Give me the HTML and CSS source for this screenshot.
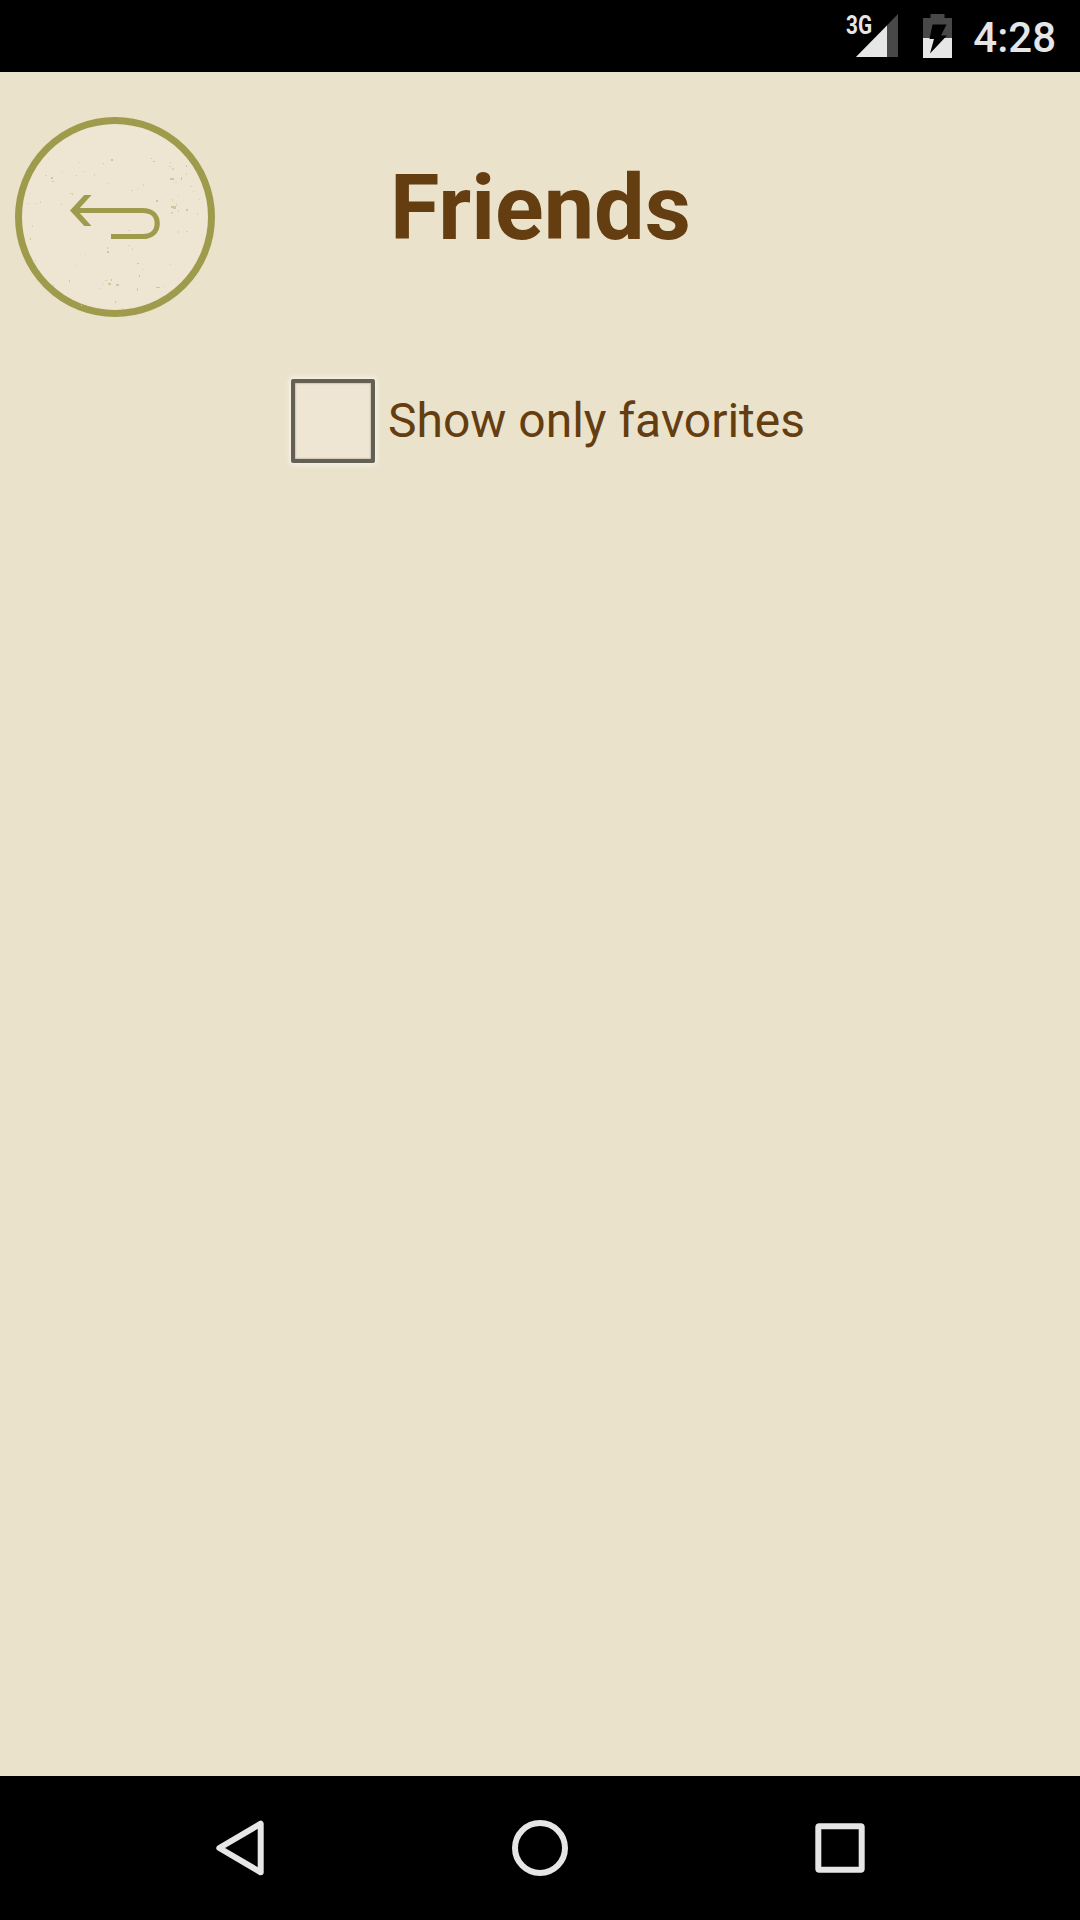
FILE: index.html
```html
<!DOCTYPE html>
<html lang="en">
<head>
<meta charset="utf-8">
<title>Friends</title>
<link rel="stylesheet" href="styles.css">
</head>
<body>
<div class="screen">
  <div class="status-bar">
    <svg class="signal" width="54" height="44" viewBox="0 0 54 44">
      <path class="dim" d="M52 0V43H10z"/>
      <path class="lit" d="M41 11.500V43H10z"/>
      <text class="network" x="0" y="19.500" textLength="26" lengthAdjust="spacingAndGlyphs">3G</text>
    </svg>
    <svg class="battery" width="29" height="44" viewBox="0 0 29 44">
      <path class="dim" d="M7.500 0h14v4H29v20H0V4h7.500z"/>
      <path class="lit" d="M0 24h29v20H0z"/>
      <path class="bolt" d="M9.500 10.500h14L18 21.500h6L7 39.500l4-14.500H6.500z"/>
    </svg>
    <time class="clock">4:28</time>
  </div>
  <main class="content">
    <header class="header">
      <button class="back" aria-label="Back">
        <svg width="200" height="200" viewBox="0 0 200 200">
          <circle class="disc" cx="100" cy="100" r="96.500"/>
          <path class="speck faint" d="M64 45h1v1h-1zM30 58h2v1h-2zM47 55h1v1h-1zM33 41h1v1h-1zM25 84h1v2h-1zM55 76h3v1h-3zM93 66h1v1h-1zM79 57h1v2h-1zM15 76h1v1h-1zM17 108h1v2h-1zM154 49h2v1h-2zM157 51h2v2h-2zM160 65h2v1h-2zM171 56h1v2h-1zM175 69h2v1h-2zM178 74h1v1h-1zM161 86h1v3h-1zM156 95h2v2h-2zM163 93h1v2h-1zM182 96h1v2h-1zM184 82h1v1h-1zM116 73h2v1h-2zM128 67h1v2h-1zM122 71h1v1h-1zM163 79h1v1h-1zM157 82h1v2h-1zM113 128h2v1h-2zM117 131h1v2h-1zM61 148h1v1h-1zM70 137h1v1h-1zM128 152h1v1h-1zM155 147h1v1h-1zM66 188h1v1h-1zM85 171h1v1h-1zM171 114h2v1h-2zM163 114h1v2h-1zM113 113h2v1h-2zM148 169h1v1h-1zM90 163h2v1h-2zM88 167h1v1h-1z"/>
          <path class="speck" d="M36 60h2v2h-2zM37 64h2v1h-2zM61 58h1v1h-1zM69 54h1v1h-1zM96 42h2v2h-2zM88 46h1v1h-1zM21 86h1v1h-1zM13 86h1v1h-1zM46 87h1v1h-1zM57 77h1v1h-1zM136 41h1v1h-1zM138 44h2v1h-2zM155 61h4v2h-4zM166 60h1v3h-1zM155 45h1v1h-1zM171 48h1v2h-1zM156 89h5v2h-5zM158 91h3v1h-3zM141 83h2v2h-2zM171 92h2v2h-2zM15 121h1v2h-1zM92 134h2v2h-2zM92 130h1v2h-1zM20 143h1v1h-1zM122 146h2v1h-2zM38 168h1v2h-1zM54 163h1v2h-1zM93 166h3v2h-3zM96 162h1v2h-1zM101 167h3v2h-3zM122 171h1v3h-1zM124 158h1v2h-1zM141 170h4v1h-4zM100 184h1v2h-1zM107 191h1v1h-1z"/>
          <path class="arrow" d="M96 119.500h31.500c9 0 14.700-5 14.700-13s-5.700-13-14.700-13H61"/>
          <path class="arrow-head" d="M55 93.500 69.300 78h7.200L62.500 93.500 76.500 109h-7.200z"/>
        </svg>
      </button>
      <h1 class="title">Friends</h1>
    </header>
    <label class="filter"><input class="checkbox" type="checkbox"><span class="filter-text">Show only favorites</span></label>
  </main>
  <nav class="nav-bar">
    <svg width="60" height="60" viewBox="0 0 60 60"><path d="M50.700 5.700v48.600L9.300 30z"/></svg>
    <svg width="60" height="60" viewBox="0 0 60 60"><circle cx="30" cy="30" r="25"/></svg>
    <svg width="60" height="60" viewBox="0 0 60 60"><rect x="8.300" y="8.300" width="43.400" height="43.400" rx="1"/></svg>
  </nav>
</div>
</body>
</html>
```
FILE: styles.css
```css
* { box-sizing: border-box; }
body { margin: 0; font-family: Roboto, sans-serif; }
.screen {
  display: flex;
  flex-direction: column;
  height: 1920px;
  width: 1080px;
  background: #eae2cb;
  color: #643d10;
}
.status-bar {
  display: flex;
  justify-content: flex-end;
  height: 72px;
  padding: 14px 24px 0 0;
  background: #000;
  color: #e6e6e6;
}
.signal { margin-right: 23px; overflow: visible; }
.battery { margin-right: 21px; }
.dim { fill: #484848; }
.lit { fill: #e6e6e6; }
.bolt { fill: #000; }
.network { fill: #e6e6e6; font-size: 25.500px; font-weight: 700; }
.clock { font-size: 42px; font-weight: 500; line-height: 48px; }
.content { flex: 1; padding: 45px 15px 0; }
.header {
  display: grid;
  grid-template-columns: 200px 1fr 200px;
  height: 259px;
}
.back { width: 200px; height: 200px; padding: 0; border: 0; background: none; }
.back svg { display: block; }
.disc { fill: #eee5d3; stroke: #9f9b4c; stroke-width: 7; }
.arrow { fill: none; stroke: #9f9b4c; stroke-width: 5.200; }
.arrow-head { fill: #9f9b4c; }
.speck { fill: #d0c79d; }
.faint { fill: #dcd3b6; }
.title { margin: 39px 0 0 1px; font-size: 90px; font-weight: 700; line-height: 106px; text-align: center; }
.filter { display: flex; align-items: center; justify-content: center; height: 90px; padding-left: 16px; gap: 13px; }
.checkbox {
  appearance: none;
  width: 84px;
  height: 84px;
  margin: 0;
  border: 4px solid #656054;
  border-radius: 2px;
  background: #eee5d3;
  box-shadow: 0 0 4px 2px #f7f1e6, inset 0 0 2px #8b8577;
}
.filter-text { font-size: 48px; line-height: 56px; }
.nav-bar {
  display: flex;
  justify-content: center;
  align-items: center;
  gap: 240px;
  height: 144px;
  background: #000;
}
.nav-bar svg { fill: none; stroke: #e6e6e6; stroke-width: 6; stroke-linejoin: round; }
```
